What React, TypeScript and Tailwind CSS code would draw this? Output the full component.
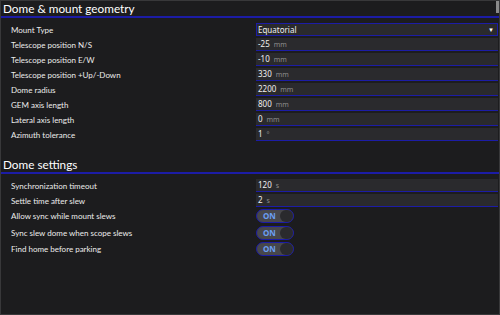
import React from "react";

const Input = ({ value, unit }: { value: string; unit: string }) => (
  <div className="h-[13px] flex items-center bg-[#2a2a2d] border-b-[1.5px] border-[#1c1ca6] pl-[2px] gap-[4px] mb-[2px]">
    <span className="text-[8px] text-[#f0f0f0] leading-none">{value}</span>
    <span className="text-[7px] text-[#8c8c8c] leading-none">{unit}</span>
  </div>
);

const Label = ({ text, h, mb }: { text: string; h: string; mb: string }) => (
  <div className={`${h} ${mb} flex items-center pl-[10px] text-[8px] text-[#ececec] leading-none font-['Lato',sans-serif]`}>{text}</div>
);

const Toggle = () => (
  <div className="h-[14px] mb-[2.5px] flex items-center">
    <div className="relative w-[38px] h-[14px] rounded-full border-[1.5px] border-[#1c1ca6] bg-[#47474b] flex items-center pl-[6px]">
      <span className="text-[8px] font-bold text-[#6b9ef2] leading-none">ON</span>
      <div className="absolute right-0 top-0 w-[13px] h-full rounded-full bg-[#2a2a2d]" />
    </div>
  </div>
);

export default function App() {
  const geo: [string, string, string][] = [
    ["Telescope position N/S", "-25", "mm"],
    ["Telescope position E/W", "-10", "mm"],
    ["Telescope position +Up/-Down", "330", "mm"],
    ["Dome radius", "2200", "mm"],
    ["GEM axis length", "800", "mm"],
    ["Lateral axis length", "0", "mm"],
    ["Azimuth tolerance", "1", "°"],
  ];
  return (
    <div className="relative w-[500px] h-[315px] overflow-hidden bg-[#1c1c1e] border border-[#38383a] font-['Noto_Sans',sans-serif]">
      <div className="absolute right-0 top-0 w-[3px] h-[12px] bg-[#8a8a8a]" />
      <div className="h-[17px] border-b-2 border-[#1c1ca6] flex items-end pl-[2px]">
        <span className="text-[11.75px] text-white leading-[15px] font-['Lato',sans-serif]">Dome &amp; mount geometry</span>
      </div>
      <div className="grid grid-cols-[255px_1fr] mt-[5px]">
        <div className="flex flex-col">
          <Label text="Mount Type" h="h-[13px]" mb="mb-[2px]" />
          {geo.map((g) => (
            <Label key={g[0]} text={g[0]} h="h-[13px]" mb="mb-[2px]" />
          ))}
        </div>
        <div className="flex flex-col pr-[1px]">
          <div className="h-[13px] mb-[2px] flex items-center justify-between bg-[#2a2a2d] border-[1.5px] border-[#1c1ca6] pl-[1px] pr-[3px]">
            <span className="text-[8px] text-[#f0f0f0] leading-none">Equatorial</span>
            <span className="text-[6px] text-white leading-none">▼</span>
          </div>
          {geo.map((g) => (
            <Input key={g[0]} value={g[1]} unit={g[2]} />
          ))}
        </div>
      </div>
      <div className="h-[17px] mt-[14px] border-b-2 border-[#1c1ca6] flex items-end pl-[2px]">
        <span className="text-[11.75px] text-white leading-[15px] font-['Lato',sans-serif]">Dome settings</span>
      </div>
      <div className="grid grid-cols-[255px_1fr] mt-[5px]">
        <div className="flex flex-col">
          <Label text="Synchronization timeout" h="h-[13px]" mb="mb-[2px]" />
          <Label text="Settle time after slew" h="h-[13px]" mb="mb-[2px]" />
          <Label text="Allow sync while mount slews" h="h-[14px]" mb="mb-[2.5px]" />
          <Label text="Sync slew dome when scope slews" h="h-[14px]" mb="mb-[2.5px]" />
          <Label text="Find home before parking" h="h-[14px]" mb="mb-[2.5px]" />
        </div>
        <div className="flex flex-col pr-[1px]">
          <Input value="120" unit="s" />
          <Input value="2" unit="s" />
          <Toggle />
          <Toggle />
          <Toggle />
        </div>
      </div>
    </div>
  );
}
